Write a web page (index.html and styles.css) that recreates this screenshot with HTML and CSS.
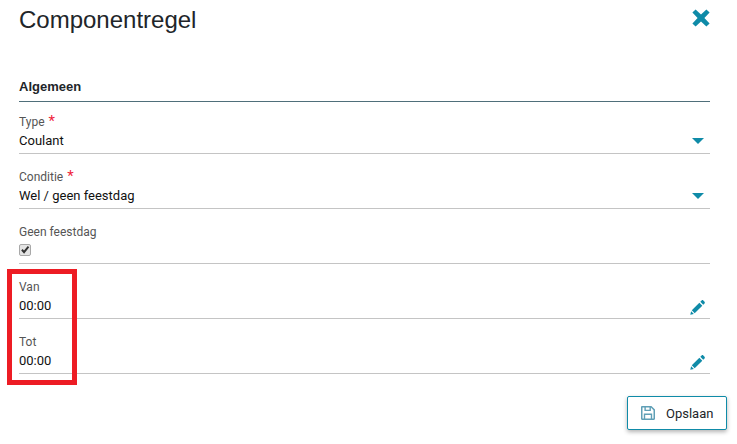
FILE: index.html
```html
<!DOCTYPE html>
<html lang="nl">
<head>
<meta charset="utf-8">
<title>Componentregel</title>
<link rel="stylesheet" href="styles.css">
</head>
<body>
<div class="page">
  <header class="head">
    <h1 class="title">Componentregel</h1>
    <svg class="close" viewBox="0 0 18 18" width="18" height="18"><path d="M3.6 0.4 9 5.6 14.4 0.4 17.6 3.6 12.4 9 17.6 14.4 14.4 17.6 9 12.4 3.6 17.6 0.4 14.4 5.6 9 0.4 3.6Z"/></svg>
  </header>
  <h2 class="section">Algemeen</h2>
  <div class="field">
    <div class="label">Type <span class="req">*</span></div>
    <div class="value-row"><span class="value">Coulant</span><span class="caret"></span></div>
  </div>
  <div class="field">
    <div class="label">Conditie <span class="req">*</span></div>
    <div class="value-row"><span class="value">Wel / geen feestdag</span><span class="caret"></span></div>
  </div>
  <div class="field">
    <div class="label">Geen feestdag</div>
    <div class="value-row">
      <span class="check"><svg viewBox="0 0 12 12" width="12" height="12"><path d="M2.2 6.4 3.6 5 5 6.5 8.8 2 10.2 3.2 5.1 9.8Z"/></svg></span>
    </div>
  </div>
  <div class="field">
    <div class="label">Van</div>
    <div class="value-row"><span class="value">00:00</span>
      <svg class="pencil" viewBox="0 0 16 16" width="15" height="15"><path d="M11 1.9 12.4.5c.5-.5 1.3-.5 1.8 0l1.3 1.3c.5.5.5 1.3 0 1.8L14.1 5ZM10 2.9 13.1 6 5 14.1 1.9 11ZM1.2 11.9 4.1 14.8.3 15.7Z"/></svg>
    </div>
  </div>
  <div class="field">
    <div class="label">Tot</div>
    <div class="value-row"><span class="value">00:00</span>
      <svg class="pencil" viewBox="0 0 16 16" width="15" height="15"><path d="M11 1.9 12.4.5c.5-.5 1.3-.5 1.8 0l1.3 1.3c.5.5.5 1.3 0 1.8L14.1 5ZM10 2.9 13.1 6 5 14.1 1.9 11ZM1.2 11.9 4.1 14.8.3 15.7Z"/></svg>
    </div>
  </div>
  <div class="actions">
    <button class="save" type="button">
      <svg viewBox="0 0 14 14" width="14" height="14"><path fill-rule="evenodd" d="M1.2 0H10.4L14 3.6V12.8C14 13.5 13.5 14 12.8 14H1.2C.5 14 0 13.5 0 12.8V1.2C0 .5.5 0 1.2 0ZM1.5 1.5V12.5H2.8V7.5H11.2V12.5H12.5V4.2L9.9 1.6V5H3.4V1.5ZM4.8 1.5V3.7H8.5V1.5ZM4.2 8.9V12.5H9.8V8.9Z"/></svg>
      <span>Opslaan</span>
    </button>
  </div>
</div>
<div class="highlight"></div>
</body>
</html>
```
FILE: styles.css
```css
html, body { margin: 0; padding: 0; background: #fff; }
body { width: 737px; height: 444px; overflow: hidden; position: relative; font-family: Roboto, "Liberation Sans", sans-serif; color: #212529; }
.page { padding: 0 27px 0 19px; }
.head { display: flex; justify-content: space-between; align-items: flex-start; height: 78px; }
.title { margin: 5px 0 0; font: 400 24px/29px "Liberation Sans", Arial, sans-serif; color: #212529; }
.close { margin-top: 9px; fill: #0f8ba8; }
.section { margin: 0 0 -3px; height: 23px; font: 700 13px/17px "Liberation Sans", Arial, sans-serif; border-bottom: 1px solid #4f6f7a; box-sizing: content-box; }
.field { height: 54px; border-bottom: 1px solid #c4c4c4; display: flex; flex-direction: column; justify-content: flex-end; }
.label { font-size: 12px; line-height: 15px; color: #555; margin-bottom: 1px; }
.req { color: #f0243c; font-size: 15px; line-height: 12px; margin-left: 1px; }
.value-row { display: flex; justify-content: space-between; align-items: center; height: 19px; padding-bottom: 3px; }
.value { font-size: 13px; line-height: 19px; color: #111; }
.caret { width: 0; height: 0; margin-right: 6px; border-left: 6px solid transparent; border-right: 6px solid transparent; border-top: 6px solid #0f8ba8; }
.check { display: block; box-sizing: border-box; width: 12px; height: 12px; margin: 0 0 1px 0; background: #e4e4e4; border: 1px solid #a8a8a8; border-radius: 2px; }
.check svg { display: block; margin: -1px; fill: #333; }
.pencil { fill: #0f8ba8; margin-top: 3px; margin-right: 5px; }
.actions { display: flex; justify-content: flex-end; padding-top: 22px; margin-right: -17px; }
.save { display: flex; align-items: center; gap: 11px; width: 100px; height: 34px; padding: 0 0 0 13px; background: #fff; border: 1px solid #0f8ba8; border-radius: 2px; box-shadow: 0 2px 4px rgba(0,0,0,.3); font: 400 13px Roboto, sans-serif; color: #212529; }
.save svg { fill: #5f9fb6; }
.highlight { position: absolute; left: 7px; top: 269px; width: 60px; height: 106px; border: 5px solid #ed1c24; }
```
